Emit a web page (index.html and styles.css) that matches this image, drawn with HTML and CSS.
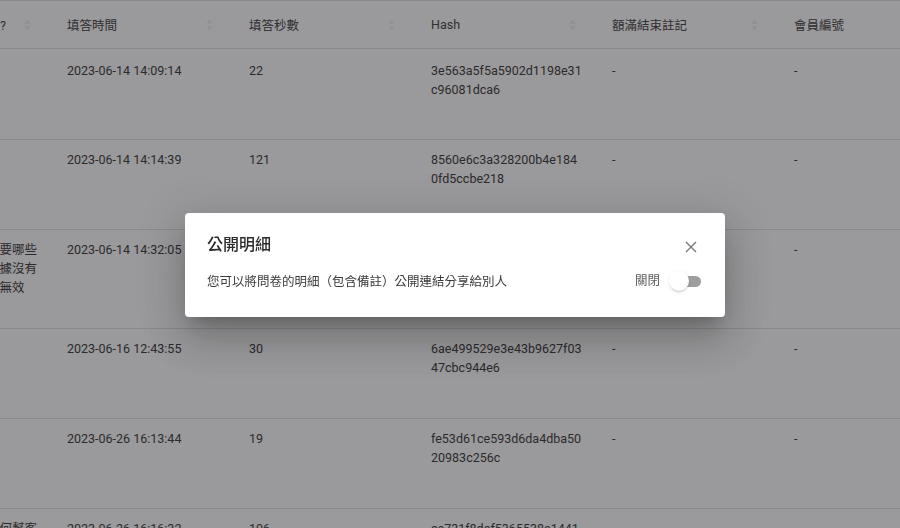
FILE: index.html
```html
<!DOCTYPE html>
<html lang="zh-Hant">
<head>
<meta charset="utf-8">
<title>公開明細</title>
<link rel="stylesheet" href="styles.css">
</head>
<body>
<div class="table">
  <div class="row head">
    <div class="hcell"><span class="clip-head">問題?</span><svg class="sort" viewBox="0 0 8 12"><path d="M4 1 L7 4.5 H1 Z M4 11 L7 7.5 H1 Z"/></svg></div>
    <div class="hcell"><span>填答時間</span><svg class="sort" viewBox="0 0 8 12"><path d="M4 1 L7 4.5 H1 Z M4 11 L7 7.5 H1 Z"/></svg></div>
    <div class="hcell"><span>填答秒數</span><svg class="sort" viewBox="0 0 8 12"><path d="M4 1 L7 4.5 H1 Z M4 11 L7 7.5 H1 Z"/></svg></div>
    <div class="hcell"><span>Hash</span><svg class="sort" viewBox="0 0 8 12"><path d="M4 1 L7 4.5 H1 Z M4 11 L7 7.5 H1 Z"/></svg></div>
    <div class="hcell"><span>額滿結束註記</span><svg class="sort" viewBox="0 0 8 12"><path d="M4 1 L7 4.5 H1 Z M4 11 L7 7.5 H1 Z"/></svg></div>
    <div class="hcell"><span>會員編號</span><svg class="sort" viewBox="0 0 8 12"><path d="M4 1 L7 4.5 H1 Z M4 11 L7 7.5 H1 Z"/></svg></div>
  </div>

  <div class="row r-first">
    <div class="cell"></div>
    <div class="cell">2023-06-14 14:09:14</div>
    <div class="cell">22</div>
    <div class="cell">3e563a5f5a5902d1198e31<br>c96081dca6</div>
    <div class="cell">-</div>
    <div class="cell">-</div>
  </div>

  <div class="row">
    <div class="cell"></div>
    <div class="cell">2023-06-14 14:14:39</div>
    <div class="cell">121</div>
    <div class="cell">8560e6c3a328200b4e184<br>0fd5ccbe218</div>
    <div class="cell">-</div>
    <div class="cell">-</div>
  </div>

  <div class="row r-tall">
    <div class="cell"><div class="clip">需要哪些數據沒有則無效</div></div>
    <div class="cell">2023-06-14 14:32:05</div>
    <div class="cell">58</div>
    <div class="cell">b71d0c4e2f9a83e6d51c7a<br>04f3b2e9d8</div>
    <div class="cell">-</div>
    <div class="cell">-</div>
  </div>

  <div class="row">
    <div class="cell"></div>
    <div class="cell">2023-06-16 12:43:55</div>
    <div class="cell">30</div>
    <div class="cell">6ae499529e3e43b9627f03<br>47cbc944e6</div>
    <div class="cell">-</div>
    <div class="cell">-</div>
  </div>

  <div class="row">
    <div class="cell"></div>
    <div class="cell">2023-06-26 16:13:44</div>
    <div class="cell">19</div>
    <div class="cell">fe53d61ce593d6da4dba50<br>20983c256c</div>
    <div class="cell">-</div>
    <div class="cell">-</div>
  </div>

  <div class="row">
    <div class="cell"><div class="clip">如何幫客戶</div></div>
    <div class="cell">2023-06-26 16:16:32</div>
    <div class="cell">106</div>
    <div class="cell">ce731f8daf5365538a1441<br>7d2b90e5a3</div>
    <div class="cell">-</div>
    <div class="cell">-</div>
  </div>
</div>

<div class="overlay">
  <div class="dialog">
    <div class="dialog-head">
      <div class="dialog-title">公開明細</div>
      <button class="close" aria-label="close">
        <svg viewBox="0 0 20 20"><path d="M5 5 L15 15 M15 5 L5 15"/></svg>
      </button>
    </div>
    <div class="dialog-body">
      <div class="desc">您可以將問卷的明細（包含備註）公開連結分享給別人</div>
      <div class="toggle-wrap">
        <span class="toggle-label">關閉</span>
        <span class="switch"><span class="track"></span><span class="knob"></span></span>
      </div>
    </div>
  </div>
</div>
</body>
</html>
```

FILE: styles.css
```css
html, body {
  margin: 0;
  padding: 0;
  background: #ffffff;
  overflow: hidden;
  width: 900px;
  height: 528px;
}

body {
  font-family: Roboto, "Noto Sans CJK TC", sans-serif;
  font-size: 12.5px;
  color: #363636;
}

.table {
  border-top: 1px solid #e2e2e2;
}

.row {
  display: grid;
  grid-template-columns: 51px 182px 182px 181px 182px 182px;
  box-sizing: border-box;
  height: 90px;
  border-bottom: 1px solid #e0e0e0;
}

.row.head {
  height: 48px;
}

.row.r-first {
  height: 91px;
}

.row.r-first .cell {
  padding-top: 12px;
}

.row.r-tall {
  height: 99px;
}

.hcell {
  display: flex;
  align-items: center;
  justify-content: space-between;
  padding: 0 19px 0 16px;
  color: #3c3c3c;
  white-space: nowrap;
}

.hcell:first-child {
  padding-left: 0;
}

.clip-head {
  margin-left: -25px;
}

.sort {
  width: 9px;
  height: 12px;
  flex: none;
  fill: #ebebeb;
  filter: blur(0.6px);
}

.cell {
  padding: 10px 16px 0;
  line-height: 19px;
  overflow: hidden;
  white-space: nowrap;
}

.cell:first-child {
  padding: 10px 0 0;
  white-space: normal;
}

.clip {
  width: 51px;
  margin-left: -13px;
}

.overlay {
  position: fixed;
  inset: 0;
  background: rgba(30, 28, 34, 0.45);
  display: flex;
  align-items: center;
  justify-content: center;
}

.dialog {
  width: 540px;
  box-sizing: border-box;
  margin: 2px 0 0 10px;
  padding: 20px 24px 23px 22px;
  background: #ffffff;
  border-radius: 4px;
  box-shadow: 0 11px 15px -7px rgba(0, 0, 0, 0.2),
              0 24px 38px 3px rgba(0, 0, 0, 0.14),
              0 9px 46px 8px rgba(0, 0, 0, 0.12);
}

.dialog-head {
  display: flex;
  align-items: center;
  justify-content: space-between;
  height: 24px;
}

.dialog-title {
  font-size: 16px;
  font-weight: 500;
  color: #2b2b2b;
  line-height: 24px;
}

.close {
  width: 20px;
  height: 20px;
  padding: 0;
  margin: 4px 0 0;
  border: 0;
  background: transparent;
  display: flex;
}

.close svg {
  width: 20px;
  height: 20px;
  stroke: #7a7a7a;
  stroke-width: 1.4;
  fill: none;
}

.dialog-body {
  margin-top: 13px;
  display: flex;
  align-items: center;
  justify-content: space-between;
  height: 24px;
}

.desc {
  color: #3a3a3a;
  line-height: 24px;
}

.toggle-wrap {
  display: flex;
  align-items: center;
  gap: 9px;
}

.toggle-label {
  color: #5f5f5f;
  line-height: 24px;
  margin-top: -2px;
}

.switch {
  position: relative;
  width: 32px;
  height: 22px;
  display: block;
}

.track {
  position: absolute;
  right: 0;
  top: 5px;
  width: 30px;
  height: 11px;
  border-radius: 6px;
  background: #9e9e9e;
}

.knob {
  position: absolute;
  left: 0;
  top: 0;
  width: 20px;
  height: 20px;
  border-radius: 50%;
  background: #ffffff;
  box-shadow: 0 2px 2px -1px rgba(0, 0, 0, 0.18), 0 1px 4px 0 rgba(0, 0, 0, 0.08);
}
```
